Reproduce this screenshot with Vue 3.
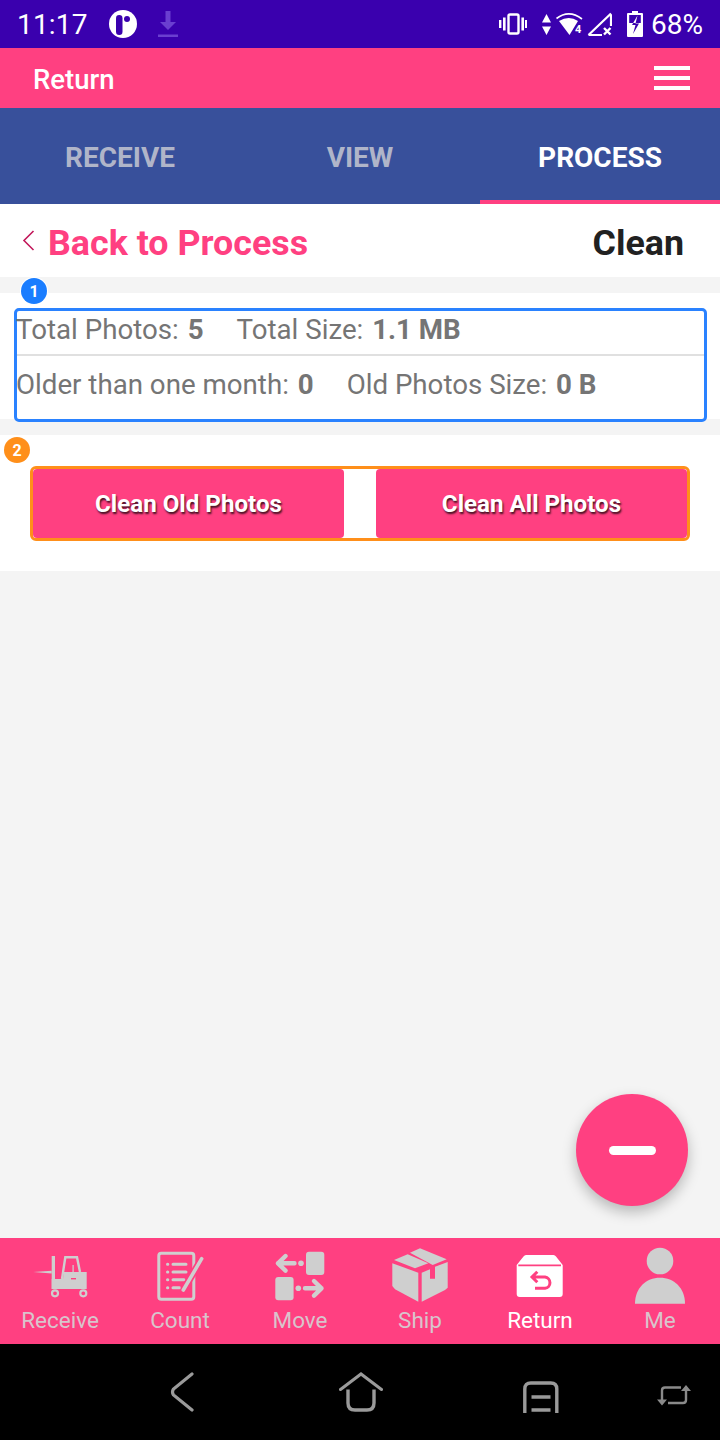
<script setup>
import { ref } from 'vue';

const tabs = ref([
  { label: 'RECEIVE', active: false },
  { label: 'VIEW', active: false },
  { label: 'PROCESS', active: true },
]);

const navItems = ref([
  { key: 'receive', label: 'Receive', active: false },
  { key: 'count', label: 'Count', active: false },
  { key: 'move', label: 'Move', active: false },
  { key: 'ship', label: 'Ship', active: false },
  { key: 'return', label: 'Return', active: true },
  { key: 'me', label: 'Me', active: false },
]);
</script>

<template>
  <div class="app">
    <div class="status">
      <span class="status__time">11:17</span>
      <svg class="status__app" viewBox="0 0 28 28" width="28" height="28">
        <circle cx="14" cy="14" r="14" fill="#fff" />
        <rect x="7" y="5" width="6.500" height="20" rx="3.250" fill="#3a00ae" />
        <circle cx="18" cy="9" r="3" fill="#3a00ae" />
      </svg>
      <svg class="status__dl" viewBox="0 0 20 26" width="20" height="26">
        <path d="M7.500 0h5v11h5.500l-8 8-8-8h5.500z" fill="#6a3fd0" />
        <rect x="0" y="23.500" width="20" height="2.500" fill="#6a3fd0" />
      </svg>
      <div class="status__right">
        <svg viewBox="0 0 28 22" width="28" height="22">
          <rect x="9.500" y="1.500" width="10" height="19" rx="1.500" fill="none" stroke="#fff" stroke-width="2.400" />
          <rect x="0" y="7" width="2.400" height="8" fill="#fff" />
          <rect x="4" y="4.500" width="2.600" height="13" fill="#fff" />
          <rect x="22.400" y="4.500" width="2.600" height="13" fill="#fff" />
          <rect x="26" y="7" width="2" height="8" fill="#fff" />
        </svg>
        <svg class="status__updown" viewBox="0 0 9 21" width="9" height="21">
          <path d="M4.500 0 9 8.500H0zM0 12.500h9L4.500 21z" fill="#fff" />
        </svg>
        <svg class="status__wifi" viewBox="0 0 27 24" width="27" height="24">
          <path d="M3 9Q13 3 22 9L13.500 23z" fill="#fff" />
          <path d="M0.500 6.500Q13 -3 26 7" fill="none" stroke="#fff" stroke-width="1.600" />
          <text x="19" y="20.500" class="status__four">4</text>
        </svg>
        <svg class="status__signal" viewBox="0 0 25 24" width="25" height="24">
          <path d="M24 2.500V14M1.500 23 24 1.500M1.500 23H15" fill="none" stroke="#fff" stroke-width="2.200" />
          <path d="M17 16l6.500 6.500M23.500 16 17 22.500" stroke="#fff" stroke-width="2.400" />
        </svg>
        <svg class="status__battery" viewBox="0 0 16 26" width="16" height="26">
          <path d="M5 0h6v2h4a1 1 0 0 1 1 1v22a1 1 0 0 1-1 1H1a1 1 0 0 1-1-1V3a1 1 0 0 1 1-1h4z" fill="#fff" />
          <rect x="2.200" y="4" width="11.600" height="8" fill="#3a00ae" />
          <path d="M10.500 4.500 6.200 12H8.600z" fill="#fff" />
          <path d="M6.200 12 5 14H8.500L6 23 12 12.500H8.500L8.600 12z" fill="#3a00ae" />
        </svg>
        <span class="status__pct">68%</span>
      </div>
    </div>

    <header class="topbar">
      <span class="topbar__title">Return</span>
      <div class="topbar__menu"><i></i><i></i><i></i></div>
    </header>

    <nav class="tabs">
      <div
        v-for="tab in tabs"
        :key="tab.label"
        class="tabs__item"
        :class="{ 'tabs__item--active': tab.active }"
      >
        {{ tab.label }}
      </div>
    </nav>

    <main class="main">
      <div class="back">
        <div class="back__link">
          <svg class="back__chev" viewBox="0 0 13 21" width="13" height="21">
            <path d="M11.500 1 2 10.500 11.500 20" fill="none" stroke="#c2185b" stroke-width="1.600" />
          </svg>
          <span>Back to Process</span>
        </div>
        <span class="back__title">Clean</span>
      </div>

      <section class="card card--stats">
        <span class="badge badge--blue">1</span>
        <div class="stats">
          <div class="stats__row">
            <span>Total Photos: <b>5</b></span>
            <span>Total Size: <b>1.1 MB</b></span>
          </div>
          <div class="stats__row stats__row--second">
            <span>Older than one month: <b>0</b></span>
            <span>Old Photos Size: <b>0 B</b></span>
          </div>
        </div>
      </section>

      <section class="card card--actions">
        <span class="badge badge--orange">2</span>
        <div class="actions">
          <button type="button" class="actions__btn">Clean Old Photos</button>
          <button type="button" class="actions__btn">Clean All Photos</button>
        </div>
      </section>

      <button type="button" class="fab" aria-label="Collapse"><i></i></button>
    </main>

    <footer class="bottom">
      <div
        v-for="item in navItems"
        :key="item.key"
        class="bottom__item"
        :class="{ 'bottom__item--active': item.active }"
      >
        <svg class="bottom__icon" viewBox="0 0 60 60" width="60" height="60">
          <g v-if="item.key === 'receive'" fill="#cfcfcf">
            <path d="M3.300 26 21.700 24.800v2.600z" />
            <rect x="21.700" y="10" width="3.300" height="33" />
            <path d="M32 33 35.300 11.300H47L50 26" fill="none" stroke="#cfcfcf" stroke-width="2.400" />
            <path d="M21.700 43V33H33L34 26H56.700V43z" />
            <rect x="41" y="32" width="5" height="1.400" fill="#ff4081" />
            <rect x="42.500" y="19" width="1.200" height="7" />
            <circle cx="25" cy="47.300" r="3" fill="#ff4081" stroke="#cfcfcf" stroke-width="2.200" />
            <circle cx="53.300" cy="47.300" r="3" fill="#ff4081" stroke="#cfcfcf" stroke-width="2.200" />
          </g>
          <g v-else-if="item.key === 'count'" fill="none" stroke="#cfcfcf">
            <rect x="8.800" y="7.200" width="35" height="46" rx="2.500" stroke-width="3" />
            <g stroke-width="3" stroke-linecap="round">
              <path d="M17.500 18.300h.3M17.500 26h.3M17.500 33.700h.3M17.500 41.700h.3" />
              <path d="M23 18.300h13M23 26h13M23 33.700h11M23 41.700h6.500" />
            </g>
            <path d="M33.300 44 51.700 12.700" stroke="#ff4081" stroke-width="7" />
            <path d="M33.300 44 51.700 12.700" stroke-width="3.600" stroke-linecap="round" />
          </g>
          <g v-else-if="item.key === 'move'" fill="#cfcfcf">
            <rect x="36" y="5.700" width="18.300" height="23.300" rx="3" />
            <rect x="5.300" y="31" width="18.300" height="23.300" rx="3" />
            <circle cx="31" cy="17.300" r="2.800" />
            <circle cx="28.300" cy="42.300" r="2.800" />
            <g fill="none" stroke="#cfcfcf" stroke-width="4.400" stroke-linecap="round" stroke-linejoin="round">
              <path d="M24.500 17.300H8M15.500 10 8 17.300l7.500 7.300" />
              <path d="M35 42.300H51.500M44 35 51.500 42.300 44 49.600" />
            </g>
          </g>
          <g v-else-if="item.key === 'ship'" fill="#cfcfcf">
            <path d="M4 14 17.700 8.300 38.300 17.300 25 22.300z" />
            <path d="M20 6.700 30 2.300 56.700 13.300 42.700 19z" />
            <path d="M2.300 17.300 28.300 26.700V55.700L5 43.300 2.300 40z" />
            <path d="M31.700 26.700 40 23.300V32.700H45V20.700L57.700 16V41.700L55 44 31.700 55.700z" />
          </g>
          <g v-else-if="item.key === 'return'">
            <path d="M6.700 19 13.500 10.500Q14.500 9 16 9H43.500Q45 9 46 10.500L52.700 19V48Q52.700 51 49.700 51H9.700Q6.700 51 6.700 48z" fill="#fff" />
            <path d="M8.300 19.300H51" stroke="#ff4081" stroke-width="1.800" />
            <path d="M22 31H35A5.700 5.700 0 0 1 35 42.300H25M27.300 25.700 22 31l5.300 5.300" fill="none" stroke="#ff4081" stroke-width="3" />
          </g>
          <g v-else fill="#cfcfcf">
            <circle cx="30" cy="15" r="13.300" />
            <path d="M5 57.700C5 42 16 31.700 30 31.700S55 42 55 57.700z" />
          </g>
        </svg>
        <span class="bottom__label">{{ item.label }}</span>
      </div>
    </footer>

    <div class="sysnav">
      <svg class="sysnav__back" viewBox="0 0 24 40" width="24" height="40">
        <path d="M22 2 3.500 17Q1.500 20 3.500 23L22 38" fill="none" stroke="#9a9a9a" stroke-width="3.200" stroke-linecap="round" />
      </svg>
      <svg class="sysnav__home" viewBox="0 0 44 40" width="44" height="40">
        <path d="M1.500 17.500 22 2l20.500 15.500" fill="none" stroke="#9a9a9a" stroke-width="3" stroke-linecap="round" />
        <path d="M9 17.500V31q0 7 7 7h12q7 0 7-7V17.500" fill="none" stroke="#9a9a9a" stroke-width="3.400" />
      </svg>
      <svg class="sysnav__recent" viewBox="0 0 36 32" width="36" height="32">
        <path d="M1.800 32V8q0-6 6-6h20q6 0 6 6v24" fill="none" stroke="#9a9a9a" stroke-width="3.400" />
        <path d="M8.500 16h19M8.500 29h19" stroke="#9a9a9a" stroke-width="3.400" />
      </svg>
      <svg class="sysnav__rotate" viewBox="0 0 34 22" width="34" height="22">
        <path d="M5 18V6.500q0-3 3-3H24M29 5.500V16q0 3-3 3H11" fill="none" stroke="#8a8a8a" stroke-width="2.400" />
        <path d="M0 15.500h10L5 21.500zM24 7h10L29 1z" fill="#8a8a8a" />
      </svg>
    </div>
  </div>
</template>

<style>
html,
body {
  margin: 0;
  background: #000;
}
</style>

<style scoped>
.app {
  width: 720px;
  height: 1440px;
  display: flex;
  flex-direction: column;
  overflow: hidden;
  font-family: Roboto, "Liberation Sans", sans-serif;
  background: #f4f4f4;
}

.status {
  height: 48px;
  flex: none;
  display: flex;
  align-items: center;
  background: #3a00ae;
  color: #fff;
  padding: 0 17px;
  box-sizing: border-box;
}

.status__time {
  font-size: 28px;
  letter-spacing: 0.2px;
  width: 92px;
}

.status__dl {
  margin-left: 21px;
}

.status__right {
  margin-left: auto;
  display: flex;
  align-items: center;
}

.status__updown {
  margin-left: 15px;
}

.status__wifi {
  margin-left: 5px;
}

.status__four {
  font-size: 11px;
  font-weight: 700;
  fill: #fff;
}

.status__signal {
  margin-left: 4px;
}

.status__battery {
  margin-left: 15px;
}

.status__pct {
  font-size: 28px;
  margin-left: 8px;
}

.topbar {
  height: 60px;
  flex: none;
  display: flex;
  align-items: center;
  justify-content: space-between;
  padding: 0 30px 0 33px;
  background: #ff4081;
  color: #fff;
}

.topbar__title {
  font-size: 27.500px;
  font-weight: 500;
  padding-top: 3px;
}

.topbar__menu {
  display: flex;
  flex-direction: column;
  gap: 6px;
}

.topbar__menu i {
  display: block;
  width: 36px;
  height: 4px;
  background: #fff;
}

.tabs {
  height: 96px;
  flex: none;
  display: flex;
  background: #38509b;
}

.tabs__item {
  flex: 1;
  display: flex;
  align-items: center;
  justify-content: center;
  font-size: 28px;
  font-weight: 700;
  color: #b0b5c9;
  box-sizing: border-box;
  padding-top: 3px;
}

.tabs__item--active {
  color: #fff;
  border-bottom: 4px solid #ff4081;
  padding-top: 6px;
}

.main {
  flex: 1;
  position: relative;
  background: #f4f4f4;
}

.back {
  height: 73px;
  display: flex;
  align-items: center;
  justify-content: space-between;
  padding: 5px 36px 0 22px;
  box-sizing: border-box;
  background: #fff;
  margin-bottom: 16px;
}

.back__link {
  display: flex;
  align-items: center;
  color: #ff4081;
  font-size: 35.800px;
  font-weight: 700;
}

.back__chev {
  margin-right: 13px;
  margin-top: -6px;
}

.back__title {
  font-size: 35.800px;
  font-weight: 700;
  color: #212121;
}

.card {
  position: relative;
  background: #fff;
}

.card--stats {
  height: 126px;
  padding: 15px 13px 0 14px;
  box-sizing: border-box;
  margin-bottom: 16px;
}

.badge {
  position: absolute;
  width: 26px;
  height: 26px;
  border-radius: 50%;
  color: #fff;
  font-size: 16px;
  font-weight: 700;
  display: flex;
  align-items: center;
  justify-content: center;
  box-shadow: 0 0 0 1px #fff;
}

.badge--blue {
  left: 21px;
  top: -15px;
  background: #1a7dff;
}

.badge--orange {
  left: 4px;
  top: 2px;
  background: #ff8f1a;
}

.stats {
  height: 114px;
  border: 3px solid #2a82ff;
  border-radius: 5px;
  box-sizing: border-box;
  color: #757575;
  font-size: 27.700px;
  background: #fff;
}

.stats__row {
  height: 45px;
  display: flex;
  align-items: center;
  gap: 33px;
  padding-bottom: 6px;
  box-sizing: border-box;
  border-bottom: 2px solid #e0e0e0;
}

.stats__row--second {
  height: 60px;
  padding-bottom: 4px;
  border-bottom: none;
}

.stats__row span:first-child {
  margin-left: -1px;
}

.stats b {
  margin-left: 2px;
  font-weight: 700;
}

.card--actions {
  height: 136px;
  padding: 31px 30px 0;
  box-sizing: border-box;
}

.actions {
  height: 75px;
  border: 3px solid #ff8f1a;
  border-radius: 6px;
  box-sizing: border-box;
  display: flex;
  justify-content: space-between;
  background: #fff;
}

.actions__btn {
  width: 311px;
  border: none;
  border-radius: 4px;
  background: #ff4081;
  color: #fff;
  font-family: inherit;
  font-size: 24.150px;
  font-weight: 700;
  text-shadow: 1px 2px 2px rgba(0, 0, 0, 0.75);
  padding: 0;
}

.fab {
  position: absolute;
  left: 576px;
  top: 890px;
  width: 112px;
  height: 112px;
  border: none;
  border-radius: 50%;
  background: #ff4081;
  box-shadow: 0 6px 14px rgba(0, 0, 0, 0.25);
  display: flex;
  align-items: center;
  justify-content: center;
  padding: 0;
}

.fab i {
  display: block;
  width: 47px;
  height: 9px;
  border-radius: 5px;
  background: #fff;
  margin-top: 1px;
}

.bottom {
  height: 106px;
  flex: none;
  display: flex;
  background: #ff4081;
}

.bottom__item {
  width: 120px;
  display: flex;
  flex-direction: column;
  align-items: center;
  padding-top: 8px;
  box-sizing: border-box;
  color: #d8c4cc;
}

.bottom__item--active {
  color: #fff;
}

.bottom__icon {
  flex: none;
}

.bottom__label {
  font-size: 22.500px;
  line-height: 28px;
}

.sysnav {
  height: 96px;
  flex: none;
  background: #000;
  display: flex;
  align-items: center;
  padding-left: 170px;
  box-sizing: border-box;
}

.sysnav__back {
  margin-top: -1px;
}

.sysnav__home {
  margin-left: 145px;
}

.sysnav__recent {
  margin-left: 140px;
  margin-top: 9px;
}

.sysnav__rotate {
  margin-left: 98px;
  margin-top: 6px;
}
</style>
